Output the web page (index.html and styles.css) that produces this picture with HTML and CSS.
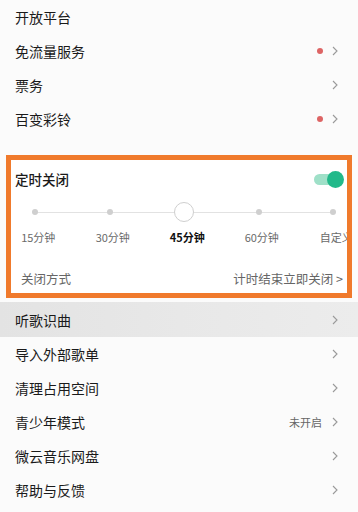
FILE: index.html
```html
<!DOCTYPE html>
<html>
<head>
<meta charset="utf-8">
<link rel="stylesheet" href="styles.css">
</head>
<body>
<div class="page">
  <div class="row"><span class="label">开放平台</span></div>
  <div class="row"><span class="label">免流量服务</span><span class="right"><span class="dot"></span><svg class="chev" viewBox="0 0 6 10"><polyline points="1,1 5,5 1,9"/></svg></span></div>
  <div class="row"><span class="label">票务</span><span class="right"><svg class="chev" viewBox="0 0 6 10"><polyline points="1,1 5,5 1,9"/></svg></span></div>
  <div class="row"><span class="label">百变彩铃</span><span class="right"><span class="dot"></span><svg class="chev" viewBox="0 0 6 10"><polyline points="1,1 5,5 1,9"/></svg></span></div>

  <div class="timer">
    <div class="timer-head">
      <span class="timer-title">定时关闭</span>
      <span class="toggle"><span class="knob"></span></span>
    </div>
    <div class="slider">
      <div class="track">
        <span class="tick"></span>
        <span class="tick"></span>
        <span class="thumb"></span>
        <span class="tick"></span>
        <span class="tick"></span>
      </div>
    </div>
    <div class="labels">
      <span>15分钟</span>
      <span>30分钟</span>
      <span class="active">45分钟</span>
      <span>60分钟</span>
      <span>自定义</span>
    </div>
    <div class="timer-foot">
      <span>关闭方式</span>
      <span>计时结束立即关闭 &gt;</span>
    </div>
  </div>

  <div class="row pressed"><span class="label">听歌识曲</span><span class="right"><svg class="chev" viewBox="0 0 6 10"><polyline points="1,1 5,5 1,9"/></svg></span></div>
  <div class="row"><span class="label">导入外部歌单</span><span class="right"><svg class="chev" viewBox="0 0 6 10"><polyline points="1,1 5,5 1,9"/></svg></span></div>
  <div class="row"><span class="label">清理占用空间</span><span class="right"><svg class="chev" viewBox="0 0 6 10"><polyline points="1,1 5,5 1,9"/></svg></span></div>
  <div class="row"><span class="label">青少年模式</span><span class="right"><span class="status">未开启</span><svg class="chev" viewBox="0 0 6 10"><polyline points="1,1 5,5 1,9"/></svg></span></div>
  <div class="row"><span class="label">微云音乐网盘</span><span class="right"><svg class="chev" viewBox="0 0 6 10"><polyline points="1,1 5,5 1,9"/></svg></span></div>
  <div class="row"><span class="label">帮助与反馈</span><span class="right"><svg class="chev" viewBox="0 0 6 10"><polyline points="1,1 5,5 1,9"/></svg></span></div>
</div>
</body>
</html>
```

FILE: styles.css
```css
html, body {
  margin: 0;
  padding: 0;
  background: #fbfbfb;
}
body {
  font-family: "Noto Sans CJK SC", "Noto Sans", sans-serif;
  color: #222;
  width: 358px;
  height: 512px;
  overflow: hidden;
}
.page {
  display: flex;
  flex-direction: column;
}
.row {
  height: 34px;
  display: flex;
  align-items: center;
  justify-content: space-between;
  padding: 0 20px 0 15px;
  flex-shrink: 0;
}
.label {
  font-size: 14px;
  line-height: 1;
  color: #1a1a1a;
}
.right {
  display: flex;
  align-items: center;
  gap: 9px;
}
.dot {
  width: 6px;
  height: 6px;
  border-radius: 50%;
  background: #dd6464;
}
.chev {
  width: 6px;
  height: 10px;
  fill: none;
  stroke: #9a9a9a;
  stroke-width: 1.1;
}
.status {
  font-size: 11px;
  color: #666;
  margin-right: 1px;
}
.timer {
  margin: 19px 6px 0 6px;
  height: 143px;
  box-sizing: border-box;
  border: 5px solid #f07a2c;
  background: #fff;
  overflow: hidden;
  display: flex;
  flex-direction: column;
}
.timer-head {
  height: 38px;
  display: flex;
  align-items: center;
  justify-content: space-between;
  padding: 0 4px 0 4px;
}
.timer-title {
  font-size: 13.5px;
  color: #1a1a1a;
  font-weight: 500;
}
.toggle {
  position: relative;
  width: 28px;
  height: 11px;
  border-radius: 6px;
  background: #9fe0c8;
  margin-right: 1px;
}
.knob {
  position: absolute;
  right: -2px;
  top: -3px;
  width: 17px;
  height: 17px;
  border-radius: 50%;
  background: #22b98a;
}
.slider {
  height: 28px;
  display: flex;
  align-items: center;
  padding: 0 14px 0 24px;
}
.track {
  flex: 1;
  height: 1px;
  background: #e2e2e2;
  display: flex;
  align-items: center;
  justify-content: space-between;
}
.tick {
  width: 6px;
  height: 6px;
  border-radius: 50%;
  background: #cfcfcf;
  margin: 0 -3px;
}
.thumb {
  width: 20px;
  height: 20px;
  box-sizing: border-box;
  border-radius: 50%;
  border: 1px solid #cfcfcf;
  background: #fff;
  margin: 0 -10px;
}
.labels {
  height: 22px;
  display: grid;
  grid-template-columns: repeat(5, 74.5px);
  margin-left: -10px;
  align-items: center;
}
.labels span {
  text-align: center;
  font-size: 11px;
  color: #6a6a6a;
  white-space: nowrap;
}
.labels .active {
  color: #111;
  font-weight: 700;
}
.timer-foot {
  margin-top: 15px;
  height: 30px;
  display: flex;
  align-items: center;
  justify-content: space-between;
  padding: 0 4px 0 10px;
  font-size: 12.5px;
  color: #666;
}
.row.pressed {
  margin-top: 4px;
  height: 35px;
  background: linear-gradient(90deg, #e3e3e3 0%, #e8e8e8 50%, #ececec 100%);
}
```
